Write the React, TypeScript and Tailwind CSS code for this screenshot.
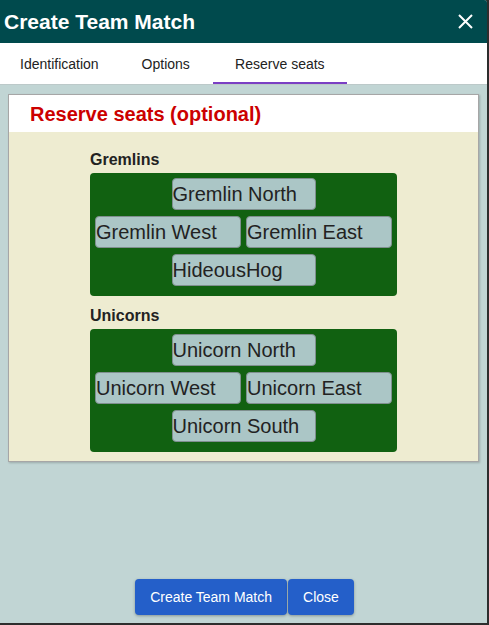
import React from 'react';

const teams = [
  { name: 'Gremlins', seats: ['Gremlin North', 'Gremlin West', 'Gremlin East', 'HideousHog'] },
  { name: 'Unicorns', seats: ['Unicorn North', 'Unicorn West', 'Unicorn East', 'Unicorn South'] },
];

const Seat: React.FC<{ label: string; narrow?: boolean }> = ({ label, narrow }) => (
  <button
    className={`h-[32px] ${narrow ? 'w-[144px]' : 'w-[146px]'} rounded-[4px] border border-[#7f8f8f] bg-[#abc6c6] text-left text-[20px] leading-none text-[#222] pl-0`}
  >
    {label}
  </button>
);

export default function App() {
  return (
    <div className="min-h-screen bg-[#2d2d2d]" style={{ fontFamily: '"Liberation Sans", Arial, sans-serif' }}>
      <div className="flex h-[623px] w-[487px] flex-col overflow-hidden rounded-tr-[3px] bg-[#c1d5d4]">
        <div className="flex h-[43px] shrink-0 items-center justify-between bg-[#004a4d] pl-[4px] pr-[14px]">
          <h1 className="text-[21px] font-bold text-white">Create Team Match</h1>
          <svg width="15" height="15" viewBox="0 0 15 15" className="text-white">
            <path d="M1 1L14 14M14 1L1 14" stroke="currentColor" strokeWidth="2" />
          </svg>
        </div>

        <div className="flex h-[42px] shrink-0 items-stretch border-b border-[#bcc9c9] bg-white text-[14px] text-[#222]">
          <div className="flex items-center px-[20px] pt-[2px]">Identification</div>
          <div className="flex items-center px-[23px] pt-[2px]">Options</div>
          <div className="flex w-[134px] items-center justify-center border-b-2 border-[#7b3fc4] pt-[4px]">Reserve seats</div>
        </div>

        <div className="mx-[8px] mt-[9px] flex flex-col border border-[#a6a6a6] shadow-[1px_1px_2px_rgba(0,0,0,0.2)]">
          <div className="flex h-[37px] items-center bg-white pl-[21px]">
            <h2 className="text-[20px] font-bold text-[#cc0000]">Reserve seats (optional)</h2>
          </div>
          <div className="flex flex-col items-center bg-[#eeecd1] pb-[9px] pt-[18px]">
            {teams.map(team => (
              <div key={team.name} className="mb-[10px] w-[307px] last:mb-0">
                <div className="mb-[3px] text-[16px] font-bold leading-[20px] text-[#222]">{team.name}</div>
                <div className="flex flex-col items-center gap-[6px] rounded-[4px] bg-[#116111] pb-[10px] pt-[5px]">
                  <Seat label={team.seats[0]} narrow />
                  <div className="flex gap-[5px]">
                    <Seat label={team.seats[1]} />
                    <Seat label={team.seats[2]} />
                  </div>
                  <Seat label={team.seats[3]} narrow />
                </div>
              </div>
            ))}
          </div>
        </div>

        <div className="mt-auto mb-[8px] flex justify-center pl-[2px]">
          <button className="h-[36px] rounded-[4px] bg-[#245fc9] px-[15px] text-[14px] text-white shadow-[0_1px_3px_rgba(0,0,0,0.3)]">
            Create Team Match
          </button>
          <button className="ml-px h-[36px] rounded-[4px] bg-[#245fc9] px-[15px] text-[14px] text-white shadow-[0_1px_3px_rgba(0,0,0,0.3)]">
            Close
          </button>
        </div>
      </div>
    </div>
  );
}
